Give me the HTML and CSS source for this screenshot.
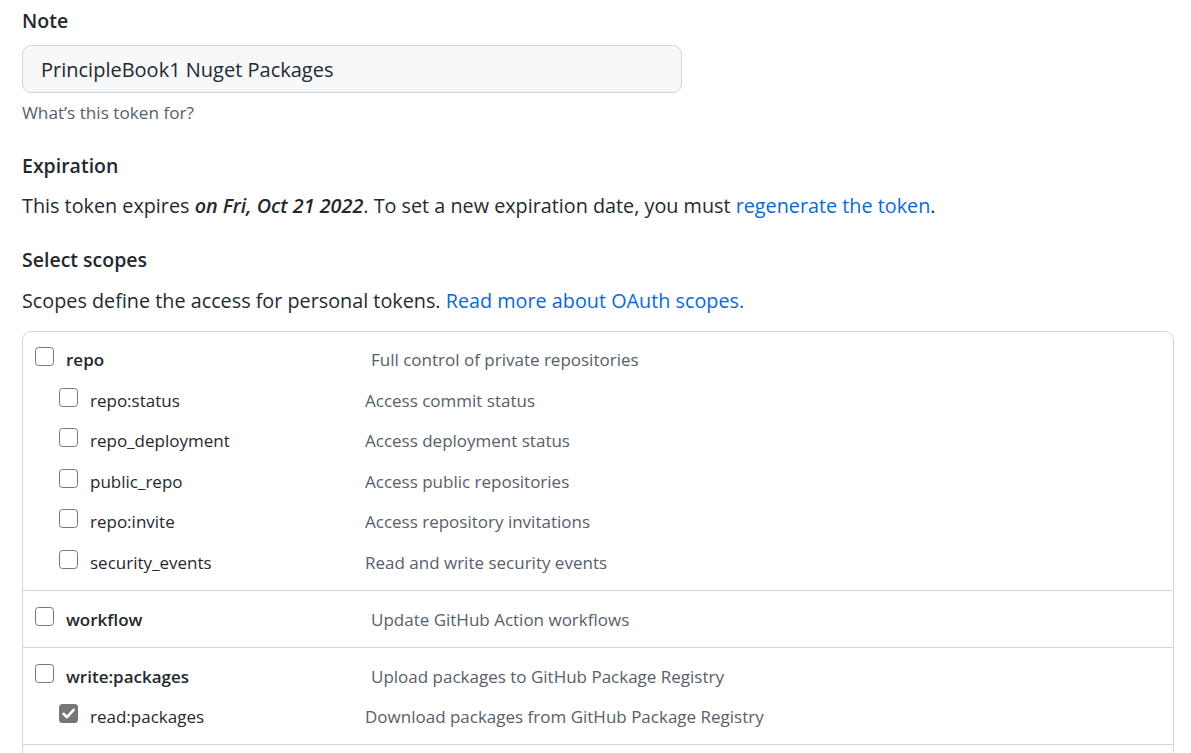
FILE: index.html
```html
<!DOCTYPE html>
<html lang="en">
<head>
<meta charset="utf-8">
<title>Token</title>
<link rel="stylesheet" href="styles.css">
</head>
<body>
<div class="page">
  <div class="field-label">Note</div>
  <div class="note-input">PrincipleBook1 Nuget Packages</div>
  <div class="hint">What’s this token for?</div>

  <div class="heading heading-exp">Expiration</div>
  <p class="text text-exp">This token expires <em>on Fri, Oct 21 2022</em>. To set a new expiration date, you must <a href="#">regenerate the token</a>.</p>

  <div class="heading heading-scopes">Select scopes</div>
  <p class="text text-scopes">Scopes define the access for personal tokens. <a href="#">Read more about OAuth scopes.</a></p>

  <div class="scopes">
    <div class="group">
      <div class="line top">
        <span class="cb"></span>
        <span class="name">repo</span>
        <span class="desc">Full control of private repositories</span>
      </div>
      <div class="line sub">
        <span class="cb"></span>
        <span class="name">repo:status</span>
        <span class="desc">Access commit status</span>
      </div>
      <div class="line sub">
        <span class="cb"></span>
        <span class="name">repo_deployment</span>
        <span class="desc">Access deployment status</span>
      </div>
      <div class="line sub">
        <span class="cb"></span>
        <span class="name">public_repo</span>
        <span class="desc">Access public repositories</span>
      </div>
      <div class="line sub">
        <span class="cb"></span>
        <span class="name">repo:invite</span>
        <span class="desc">Access repository invitations</span>
      </div>
      <div class="line sub">
        <span class="cb"></span>
        <span class="name">security_events</span>
        <span class="desc">Read and write security events</span>
      </div>
    </div>
    <div class="group">
      <div class="line top">
        <span class="cb"></span>
        <span class="name">workflow</span>
        <span class="desc">Update GitHub Action workflows</span>
      </div>
    </div>
    <div class="group">
      <div class="line top">
        <span class="cb"></span>
        <span class="name">write:packages</span>
        <span class="desc">Upload packages to GitHub Package Registry</span>
      </div>
      <div class="line sub">
        <span class="cb checked"><svg viewBox="0 0 19 19" width="19" height="19"><path d="M4.5 9.8 L8 13.2 L14.6 5.8" fill="none" stroke="#fff" stroke-width="2.6" stroke-linecap="round" stroke-linejoin="round"/></svg></span>
        <span class="name">read:packages</span>
        <span class="desc">Download packages from GitHub Package Registry</span>
      </div>
    </div>
    <div class="group">
      <div class="line top">
        <span class="cb"></span>
        <span class="name">delete:packages</span>
        <span class="desc">Delete packages from GitHub Package Registry</span>
      </div>
    </div>
  </div>
</div>
</body>
</html>
```

FILE: styles.css
```css
html, body {
  margin: 0;
  padding: 0;
  background: #ffffff;
}

body {
  font-family: "Open Sans", "Noto Sans", "Liberation Sans", sans-serif;
  color: #24292f;
}

.page {
  padding: 6px 17px 0 22px;
}

.field-label,
.heading {
  font-size: 19.5px;
  font-weight: 600;
  line-height: 30px;
}

.note-input {
  margin-top: 9px;
  width: 660px;
  height: 48px;
  box-sizing: border-box;
  border: 1px solid #d0d7de;
  border-radius: 9px;
  background: #f6f8fa;
  padding: 1px 18px 0;
  font-size: 20px;
  line-height: 46px;
  color: #24292f;
}

.hint {
  margin-top: 9px;
  font-size: 17.2px;
  line-height: 22px;
  color: #57606a;
}

.heading-exp {
  margin-top: 27px;
}

.heading-scopes {
  margin-top: 26px;
}

.text {
  margin: 0;
  font-size: 19.8px;
  line-height: 26px;
}

.text-exp {
  margin-top: 12px;
}

.text-scopes {
  margin-top: 13px;
}

.text em {
  font-weight: 600;
  font-style: italic;
}

.text a {
  color: #0969da;
  text-decoration: none;
}

.scopes {
  margin-top: 17px;
  border: 1px solid #d0d7de;
  border-radius: 9px;
}

.group {
  padding: 16px 0 14px 12px;
  border-top: 1px solid #d0d7de;
}

.group:first-child {
  border-top: 0;
  padding-top: 15px;
}

.line {
  display: flex;
  align-items: flex-start;
  font-size: 17px;
  line-height: 26px;
}

.line + .line {
  margin-top: 14.5px;
}

.cb {
  flex: none;
  width: 19px;
  height: 19px;
  box-sizing: border-box;
  border: 1.5px solid #767676;
  border-radius: 3.5px;
  margin-top: 0;
  background: #fff;
}

.cb.checked {
  border: 0;
  background: #767676;
}

.cb svg {
  display: block;
}

.name {
  flex: none;
  margin-left: 12px;
}

.top .name {
  width: 305px;
  font-weight: 600;
}

.sub {
  padding-left: 24px;
}

.sub .name {
  width: 275px;
}

.desc {
  color: #57606a;
}
```
